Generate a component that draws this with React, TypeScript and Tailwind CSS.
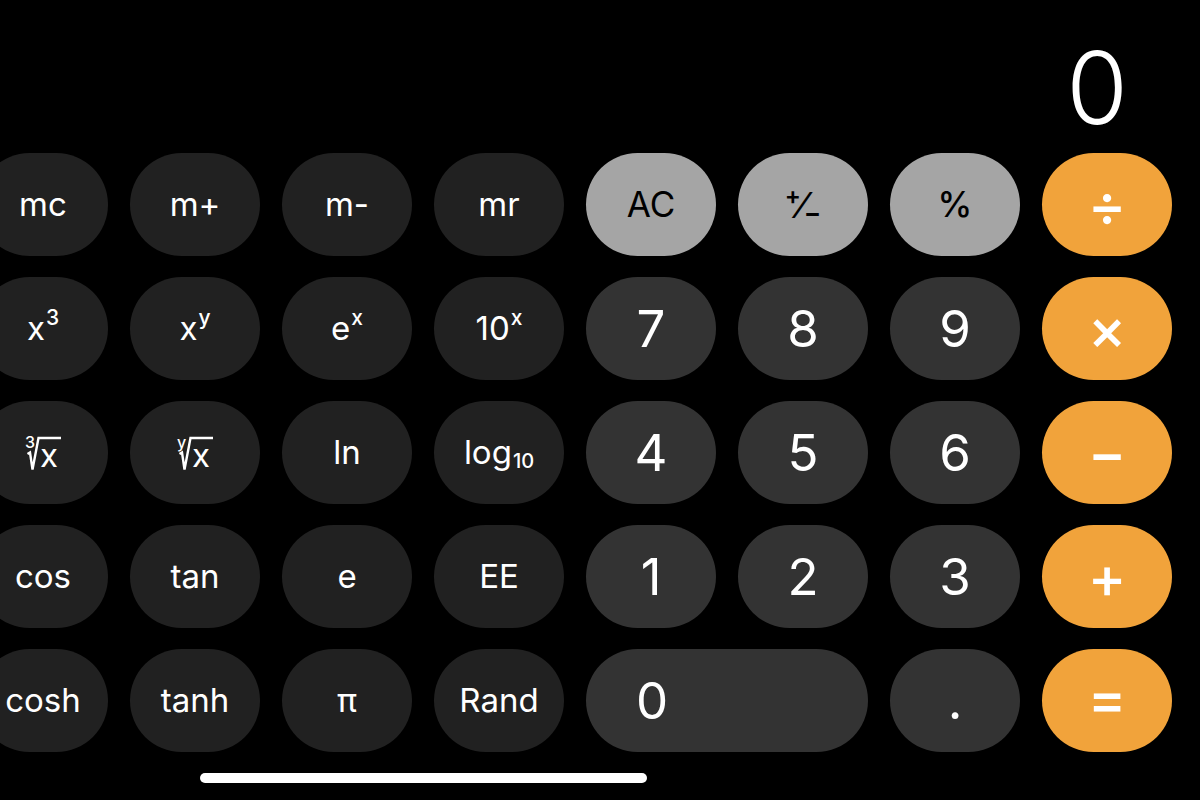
import type { ReactNode } from "react";

type Tone = "fn" | "num" | "gray" | "op";

const TONE: Record<Tone, string> = {
  fn: "bg-[#212121] text-white",
  num: "bg-[#333333] text-white",
  gray: "bg-[#a5a5a5] text-black",
  op: "bg-[#f1a33b] text-white",
};

function Key({
  tone,
  children,
  wide,
  size = "label",
}: {
  tone: Tone;
  children: ReactNode;
  wide?: boolean;
  size?: "label" | "digit" | "op";
}) {
  const text =
    size === "digit"
      ? "text-[51px] font-normal"
      : size === "op"
        ? "text-[58px] font-medium"
        : "text-[33px] font-normal";
  return (
    <button
      type="button"
      className={`${TONE[tone]} ${text} ${
        wide ? "col-span-2 justify-start pl-[50px]" : "justify-center"
      } flex h-[103px] items-center rounded-full leading-none`}
    >
      {children}
    </button>
  );
}

function Sup({ base, exp }: { base: string; exp: string }) {
  return (
    <span className="inline-flex items-start">
      <span>{base}</span>
      <span className="-mt-[5px] ml-[1px] text-[21px] font-medium">{exp}</span>
    </span>
  );
}

function Root({ index }: { index: string }) {
  return (
    <span className="relative inline-block h-[37px] w-[36px]">
      <span className="absolute left-0 top-0 text-[16px] font-medium leading-none">{index}</span>
      <svg className="absolute inset-0" width="36" height="37" viewBox="0 0 36 37" fill="none">
        <path d="M2.5 20 L5 18.5 L7.5 35.5 L13.5 4 L36 4" stroke="white" strokeWidth="2.4" strokeLinejoin="miter" />
      </svg>
      <span className="absolute left-[15px] top-[5px] text-[33px] leading-none">x</span>
    </span>
  );
}

function PlusMinus() {
  return (
    <span className="inline-flex items-center">
      <span className="-translate-y-[9px] text-[24px] font-semibold">+</span>
      <span className="-mx-[2px] text-[36px]">⁄</span>
      <span className="translate-y-[8px] text-[26px] font-semibold">−</span>
    </span>
  );
}

export default function App() {
  return (
    <div
      className="h-[800px] w-[1200px] overflow-hidden bg-black text-white"
      style={{ fontFamily: "Inter, 'Noto Sans', sans-serif" }}
    >
      <div className="flex h-[153px] items-end justify-end pb-[15px] pr-[76px]">
        <span className="text-[100px] font-light leading-none tracking-[-4px]">0</span>
      </div>

      <div className="-ml-[22px] grid w-[1238px] grid-cols-[repeat(8,130px)] gap-x-[22px] gap-y-[21px]">
        <Key tone="fn">mc</Key>
        <Key tone="fn">m+</Key>
        <Key tone="fn">m-</Key>
        <Key tone="fn">mr</Key>
        <Key tone="gray">
          <span className="text-[35px]">AC</span>
        </Key>
        <Key tone="gray">
          <PlusMinus />
        </Key>
        <Key tone="gray">
          <span className="text-[35px] font-medium">%</span>
        </Key>
        <Key tone="op" size="op">÷</Key>

        <Key tone="fn">
          <Sup base="x" exp="3" />
        </Key>
        <Key tone="fn">
          <Sup base="x" exp="y" />
        </Key>
        <Key tone="fn">
          <Sup base="e" exp="x" />
        </Key>
        <Key tone="fn">
          <Sup base="10" exp="x" />
        </Key>
        <Key tone="num" size="digit">7</Key>
        <Key tone="num" size="digit">8</Key>
        <Key tone="num" size="digit">9</Key>
        <Key tone="op" size="op">×</Key>

        <Key tone="fn">
          <Root index="3" />
        </Key>
        <Key tone="fn">
          <Root index="y" />
        </Key>
        <Key tone="fn">ln</Key>
        <Key tone="fn">
          <span className="inline-flex items-end">
            <span>log</span>
            <span className="ml-[1px] translate-y-[2px] text-[20px] font-medium">10</span>
          </span>
        </Key>
        <Key tone="num" size="digit">4</Key>
        <Key tone="num" size="digit">5</Key>
        <Key tone="num" size="digit">6</Key>
        <Key tone="op" size="op">−</Key>

        <Key tone="fn">cos</Key>
        <Key tone="fn">tan</Key>
        <Key tone="fn">e</Key>
        <Key tone="fn">EE</Key>
        <Key tone="num" size="digit">1</Key>
        <Key tone="num" size="digit">2</Key>
        <Key tone="num" size="digit">3</Key>
        <Key tone="op" size="op">+</Key>

        <Key tone="fn">cosh</Key>
        <Key tone="fn">tanh</Key>
        <Key tone="fn">π</Key>
        <Key tone="fn">Rand</Key>
        <Key tone="num" size="digit" wide>
          0
        </Key>
        <Key tone="num" size="digit">.</Key>
        <Key tone="op" size="op">
          <span className="-translate-y-[3px]">=</span>
        </Key>
      </div>

      <div className="ml-[200px] mt-[21px] h-[10px] w-[447px] rounded-full bg-white" />
    </div>
  );
}
